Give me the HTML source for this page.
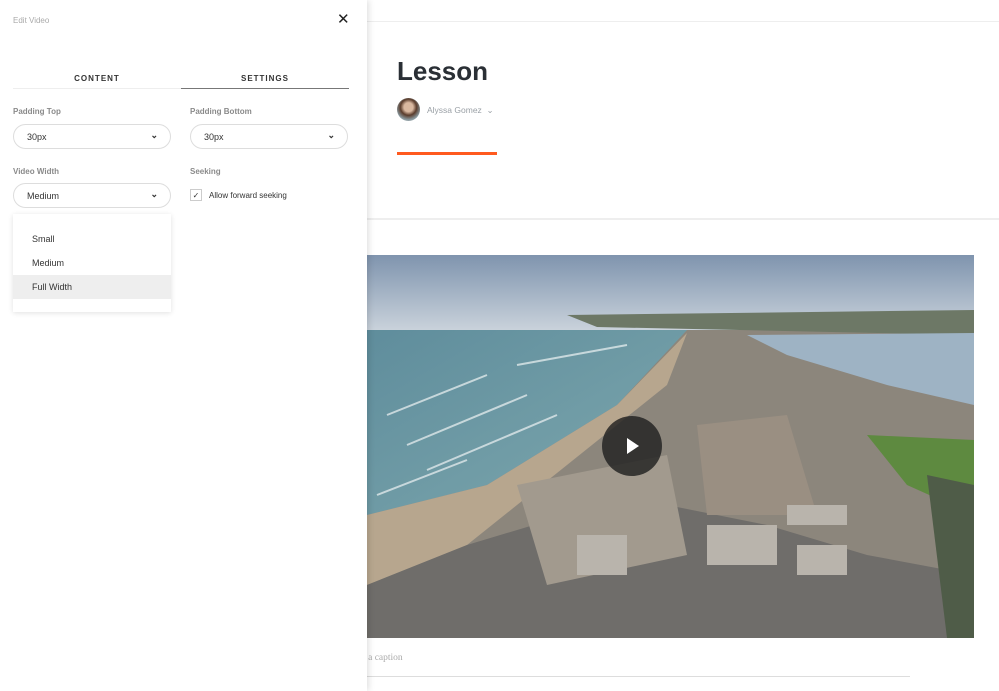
<!DOCTYPE html>
<html><head><style>
*{margin:0;padding:0;box-sizing:border-box}
body{width:999px;height:691px;overflow:hidden;background:#fff;font-family:"Liberation Sans",sans-serif;position:relative}
.abs{position:absolute}
.panel{left:0;top:0;width:367px;height:691px;background:#fff;box-shadow:2px 0 6px rgba(0,0,0,.12);z-index:5}
.lbl{font-size:8px;color:#8a8a8a;font-weight:bold}
.sel{height:25px;border:1px solid #ddd;border-radius:13px;font-size:9px;color:#333;padding:7px 0 0 13px}
.chev{position:absolute;right:12px;top:5px;font-size:9px;font-weight:bold;color:#333}
</style></head><body>
<div class="abs" style="left:367px;top:21px;width:632px;height:1px;background:#eee"></div>
<div class="abs" style="left:397px;top:56px;font-size:26px;font-weight:bold;color:#2a2f35">Lesson</div>
<div class="abs" style="left:397px;top:98px;width:23px;height:23px;border-radius:50%;background:radial-gradient(circle at 50% 40%,#d9b8a0 0 25%,#5a3c2c 45%,#8a9aa0 70%,#ccc)"></div>
<div class="abs" style="left:427px;top:105px;font-size:8.5px;color:#9aa0a6">Alyssa Gomez &nbsp;⌄</div>
<div class="abs" style="left:397px;top:152px;width:100px;height:3px;background:#ff5a1f"></div>
<div class="abs" style="left:367px;top:218px;width:632px;height:2px;background:#eee"></div>
<svg class="abs" style="left:367px;top:255px" width="607" height="383" viewBox="0 0 607 383">
<defs><linearGradient id="sky" x1="0" y1="0" x2="0" y2="1"><stop offset="0" stop-color="#7f94ae"/><stop offset="1" stop-color="#c9d2db"/></linearGradient>
<linearGradient id="sea" x1="0" y1="0" x2="1" y2="1"><stop offset="0" stop-color="#5f8d9c"/><stop offset="1" stop-color="#7ea8ae"/></linearGradient></defs>
<rect width="607" height="383" fill="#8c867c"/>
<rect width="607" height="75" fill="url(#sky)"/>
<polygon points="0,75 320,75 250,150 120,230 0,260" fill="url(#sea)"/>
<g stroke="#dfe8ea" stroke-width="2" fill="none" opacity=".8">
<path d="M20,160 L120,120"/><path d="M40,190 L160,140"/><path d="M60,215 L190,160"/><path d="M10,240 L100,205"/><path d="M150,110 L260,90"/></g>
<polygon points="0,260 120,230 250,150 320,78 300,130 200,210 100,290 0,330" fill="#b7a68e"/>
<polygon points="200,60 607,55 607,80 230,72" fill="#6d7866"/>
<polygon points="380,80 607,78 607,150 520,130 420,100" fill="#9eb3c4"/>
<polygon points="500,180 607,185 607,260 540,230" fill="#5e8a40"/>
<polygon points="0,330 100,290 200,260 300,250 400,270 500,300 607,320 607,383 0,383" fill="#6f6d6a"/>
<polygon points="150,230 300,200 320,300 180,330" fill="#a29a8e"/>
<polygon points="330,170 420,160 450,260 340,260" fill="#9a8f82"/>
<polygon points="560,220 607,230 607,383 580,383" fill="#4f5c48"/>
<g fill="#b9b4ac"><rect x="340" y="270" width="70" height="40"/><rect x="430" y="290" width="50" height="30"/><rect x="210" y="280" width="50" height="40"/><rect x="420" y="250" width="60" height="20"/></g>
<circle cx="265" cy="191" r="30" fill="rgba(30,30,30,.8)"/>
<polygon points="260,183 260,199 272,191" fill="#fff"/>
</svg>
<div class="abs" style="left:361px;top:653px;font-family:'Liberation Serif',serif;font-size:9.5px;color:#aaa">d a caption</div>
<div class="abs" style="left:361px;top:676px;width:549px;height:1px;background:#ddd"></div>

<div class="abs panel">
<div class="abs" style="left:13px;top:16px;font-size:8px;color:#aaa">Edit Video</div>
<div class="abs" style="left:337px;top:10px;font-size:15px;color:#222">✕</div>
<div class="abs" style="left:13px;top:74px;width:168px;text-align:center;font-size:8px;font-weight:bold;letter-spacing:1px;color:#333">CONTENT</div>
<div class="abs" style="left:181px;top:74px;width:168px;text-align:center;font-size:8px;font-weight:bold;letter-spacing:1px;color:#333">SETTINGS</div>
<div class="abs" style="left:13px;top:88px;width:168px;height:1px;background:#eee"></div>
<div class="abs" style="left:181px;top:88px;width:168px;height:1px;background:#777"></div>
<div class="abs lbl" style="left:13px;top:107px">Padding Top</div>
<div class="abs lbl" style="left:190px;top:107px">Padding Bottom</div>
<div class="abs sel" style="left:13px;top:124px;width:158px">30px<span class="chev">⌄</span></div>
<div class="abs sel" style="left:190px;top:124px;width:158px">30px<span class="chev">⌄</span></div>
<div class="abs lbl" style="left:13px;top:167px">Video Width</div>
<div class="abs lbl" style="left:190px;top:167px">Seeking</div>
<div class="abs sel" style="left:13px;top:183px;width:158px">Medium<span class="chev">⌄</span></div>
<div class="abs" style="left:190px;top:189px;width:12px;height:12px;border:1px solid #ccc;font-size:8px;text-align:center;line-height:11px;color:#333">✓</div>
<div class="abs" style="left:209px;top:191px;font-size:8px;color:#333">Allow forward seeking</div>
<div class="abs" style="left:13px;top:214px;width:158px;height:98px;background:#fff;box-shadow:0 1px 5px rgba(0,0,0,.12)">
<div class="abs" style="left:19px;top:20px;font-size:9px;color:#333">Small</div>
<div class="abs" style="left:19px;top:44px;font-size:9px;color:#333">Medium</div>
<div class="abs" style="left:0;top:61px;width:158px;height:24px;background:#eee"></div>
<div class="abs" style="left:19px;top:68px;font-size:9px;color:#333">Full Width</div>
</div>
</div>
</body></html>
